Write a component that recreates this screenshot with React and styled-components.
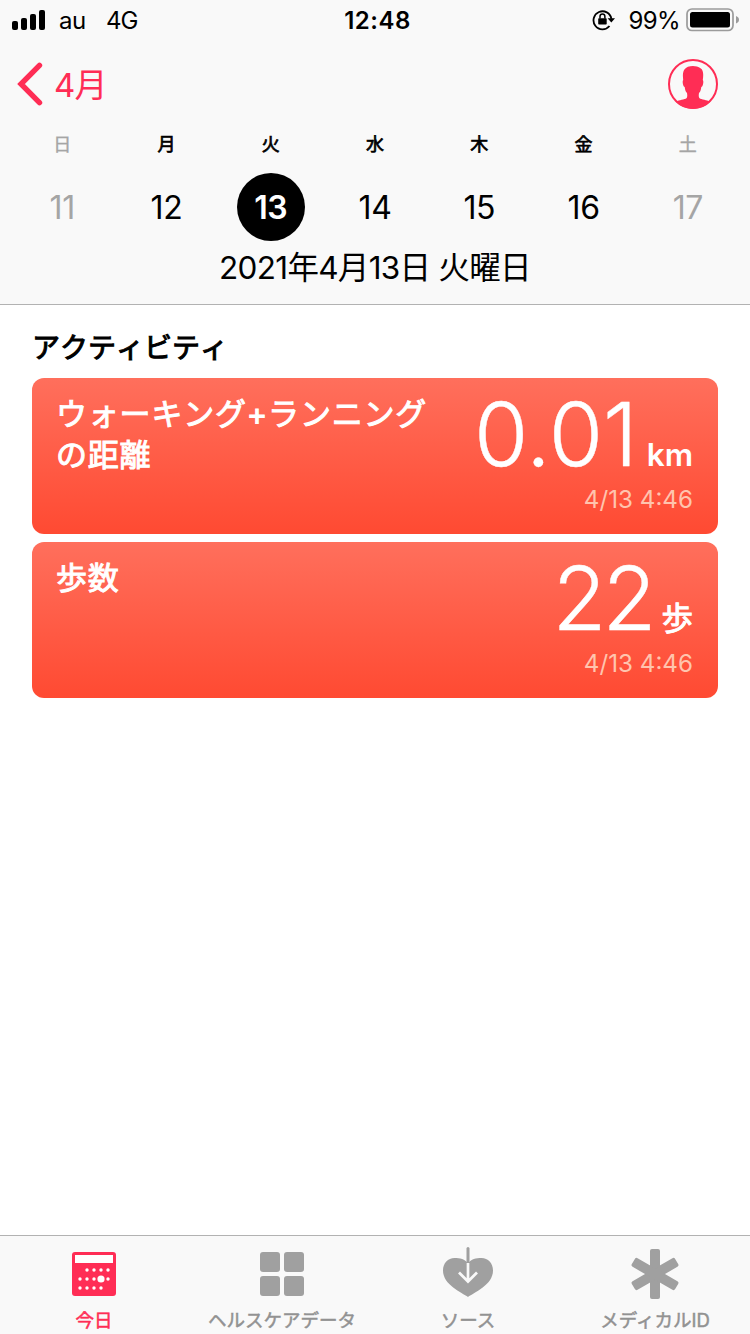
import React from "react";
import styled, { createGlobalStyle } from "styled-components";

const GlobalStyle = createGlobalStyle`
  * {
    box-sizing: border-box;
  }

  body {
    margin: 0;
    background: #fff;
    font-family: "Inter", "Noto Sans CJK JP", sans-serif;
    color: #000;
  }
`;

const Screen = styled.div`
  display: flex;
  flex-direction: column;
  width: 750px;
  height: 1334px;
  overflow: hidden;
`;

const Header = styled.header`
  height: 305px;
  background: #f9f9f9;
  border-bottom: 1px solid #b2b2b2;
`;

const StatusBar = styled.div`
  display: grid;
  grid-template-columns: 1fr auto 1fr;
  align-items: center;
  height: 40px;
  padding: 0 10px 0 12px;
  font-size: 24px;
  line-height: 38px;
`;

const StatusSide = styled.div`
  display: flex;
  align-items: center;
  justify-content: ${(props) => (props.$end ? "flex-end" : "flex-start")};
`;

const Carrier = styled.span`
  margin-left: 13px;
  padding-top: 2px;
  letter-spacing: -0.4px;
`;

const Network = styled.span`
  margin-left: 20px;
  padding-top: 2px;
  letter-spacing: -0.8px;
`;

const Clock = styled.span`
  padding: 2px 0 0 3px;
  font-weight: 600;
  letter-spacing: 0.5px;
`;

const Percent = styled.span`
  margin: 0 6px 0 12px;
  padding-top: 2px;
  letter-spacing: -0.6px;
`;

const NavBar = styled.nav`
  display: flex;
  align-items: center;
  justify-content: space-between;
  height: 88px;
  padding: 0 32px 0 17px;
`;

const BackButton = styled.button`
  display: flex;
  align-items: center;
  gap: 10px;
  padding: 0;
  border: 0;
  background: none;
  color: #ff2d55;
  font: inherit;
  font-size: 33px;
  letter-spacing: -0.9px;
  line-height: 40px;
`;

const BackLabel = styled.span`
  padding-top: 2px;
`;

const Week = styled.div`
  display: grid;
  grid-template-columns: repeat(7, 1fr);
  height: 113px;
  padding: 0 10px;
`;

const Day = styled.div`
  display: flex;
  flex-direction: column;
  align-items: center;
  color: ${(props) => (props.$weekend ? "#a5a5a5" : "#000")};
`;

const Weekday = styled.span`
  height: 34px;
  margin-bottom: 11px;
  font-size: 18px;
  -webkit-text-stroke: ${(props) => (props.$light ? "0.4px" : "0.7px")};
  line-height: 34px;
`;

const DayNumber = styled.span`
  width: 68px;
  height: 68px;
  border-radius: 50%;
  background: ${(props) => (props.$selected ? "#000" : "transparent")};
  color: ${(props) => (props.$selected ? "#fff" : "inherit")};
  font-size: 32px;
  font-weight: ${(props) => (props.$selected ? 600 : 400)};
  letter-spacing: -0.4px;
  line-height: 69px;
  text-align: center;
`;

const FullDate = styled.div`
  height: 54px;
  font-size: 31.5px;
  letter-spacing: -0.7px;
  line-height: 54px;
  text-align: center;
`;

const Main = styled.main`
  flex: 1;
  padding: 23px 32px 0;
`;

const SectionTitle = styled.h2`
  height: 40px;
  margin: 0 0 10px;
  font-size: 28px;
  font-weight: 400;
  font-kerning: none;
  -webkit-text-stroke: 1px;
  line-height: 40px;
`;

const Card = styled.section`
  display: flex;
  justify-content: space-between;
  height: 156px;
  margin-bottom: 8px;
  padding: 16px 25px 0;
  border-radius: 12px;
  background: linear-gradient(#ff6f5c, #ff4a32);
  color: #fff;
`;

const CardTitle = styled.h3`
  width: 380px;
  margin: -1px 0 0 -1px;
  font-size: 31px;
  font-weight: 400;
  font-kerning: none;
  letter-spacing: 0.8px;
  -webkit-text-stroke: 1px;
  line-height: 41px;
`;

const Reading = styled.div`
  display: flex;
  flex-direction: column;
  align-items: flex-end;
`;

const ValueRow = styled.div`
  display: flex;
  align-items: baseline;
  height: 86px;
  line-height: 80px;
`;

const Value = styled.span`
  margin-right: 9px;
  font-size: 88px;
  font-weight: 300;
  letter-spacing: ${(props) => props.$tracking}px;
  -webkit-text-stroke: 0.4px;
`;

const Unit = styled.span`
  font-size: 31.5px;
  font-weight: ${(props) => (props.$kanji ? 400 : 600)};
  -webkit-text-stroke: ${(props) => (props.$kanji ? "1px" : "0")};
`;

const Time = styled.span`
  color: #ffc4ae;
  font-size: 24.2px;
  line-height: 40px;
`;

const TabBar = styled.footer`
  display: grid;
  grid-template-columns: 188px 188px 184px 190px;
  height: 99px;
  border-top: 1px solid #b2b2b2;
  background: #f9f9f9;
`;

const Tab = styled.div`
  display: flex;
  flex-direction: column;
  align-items: center;
  padding-top: 10px;
  color: ${(props) => (props.$active ? "#ff2d55" : "#a0a0a0")};
`;

const TabLabel = styled.span`
  margin-top: 4px;
  color: ${(props) => (props.$active ? "#ff2d55" : "#929292")};
  font-size: 18.5px;
  -webkit-text-stroke: 0.5px;
  line-height: 28px;
  white-space: nowrap;
`;

const SignalIcon = () => (
  <svg width="34" height="20" viewBox="0 0 34 20">
    <rect x="0" y="11" width="6" height="9" rx="2" />
    <rect x="9" y="8" width="6" height="12" rx="2" />
    <rect x="18" y="4" width="6" height="16" rx="2" />
    <rect x="27" y="0" width="6" height="20" rx="2" />
  </svg>
);

const RotationLockIcon = () => (
  <svg width="24" height="22" viewBox="0 0 24 22">
    <path
      d="M17.5 17A9 9 0 1 1 19.4 9.8"
      fill="none"
      stroke="#000"
      strokeWidth="1.8"
    />
    <path d="M15.6 9.3h7.4l-3.7 4.3z" />
    <rect x="6.2" y="9.2" width="8.5" height="6.3" rx="0.8" />
    <path
      d="M8 9.6V7.4a2.45 2.45 0 0 1 4.9 0v2.2"
      fill="none"
      stroke="#000"
      strokeWidth="1.5"
    />
  </svg>
);

const BatteryIcon = () => (
  <svg width="54" height="24" viewBox="0 0 54 24">
    <rect
      x="1"
      y="1"
      width="46"
      height="21.5"
      rx="5"
      fill="none"
      stroke="#9b9b9b"
      strokeWidth="1.7"
    />
    <rect x="4" y="4" width="40" height="15.5" rx="2.5" />
    <path d="M50 8c4 1.3 4 6.2 0 7.5z" fill="#9b9b9b" />
  </svg>
);

const BackIcon = () => (
  <svg width="27" height="44" viewBox="0 0 27 44">
    <path
      d="M22.5 3.3L4 22l18.5 18.7"
      fill="none"
      stroke="#ff2d55"
      strokeWidth="5.4"
      strokeLinecap="round"
      strokeLinejoin="miter"
    />
  </svg>
);

const ProfileIcon = () => (
  <svg width="50" height="50" viewBox="0 0 50 50">
    <circle
      cx="25"
      cy="25"
      r="24"
      fill="none"
      stroke="#ff2d55"
      strokeWidth="2"
    />
    <path
      d="M8 43C11 40.5 16.5 41 18.7 39C19.6 37.5 19.2 35.5 19 34C17.3 32.5 17 30 16.7 28C15 27.5 14 22 15.2 21C14.6 16 14.8 12.5 16.6 10.3C19 6.5 28 5.700 32.500 9.300C35.600 11 35.500 16 34.800 21C36 22 35 27.500 33.300 28C33 30 32.700 32.500 31 34C30.800 35.500 30.400 37.500 31.300 39C33.500 41 39 40.500 42 43C33 52 17 52 8 43Z"
      fill="#ff2d55"
    />
  </svg>
);

const DOTS = [
  [15, 18],
  [22, 18],
  [29, 18],
  [36, 18],
  [8, 27],
  [15, 27],
  [22, 27],
  [36, 27],
  [8, 36],
  [15, 36],
  [22, 36],
  [29, 36],
];

const TodayIcon = () => (
  <svg width="56" height="56" viewBox="-6 -6 56 56">
    <rect width="44" height="44" rx="3" fill="currentColor" />
    <path d="M3 3h38v8H3z" fill="#fff" />
    {DOTS.map(([x, y]) => (
      <circle key={`${x}-${y}`} cx={x} cy={y} r="1.7" fill="#fff" />
    ))}
    <circle cx="29" cy="27" r="3.6" fill="#fff" />
  </svg>
);

const DataIcon = () => (
  <svg width="56" height="56" viewBox="-6 -6 56 56" fill="currentColor">
    <rect width="20" height="20" rx="3" />
    <rect x="24" width="20" height="20" rx="3" />
    <rect y="24" width="20" height="20" rx="3" />
    <rect x="24" y="24" width="20" height="20" rx="3" />
  </svg>
);

const SourcesIcon = () => (
  <svg width="56" height="56" viewBox="0 0 56 56">
    <path
      d="M28 51C22 46.5 3 39 3 24.5C3 17 8 12 14.5 12C20 12 25 13 28 17.5C31 13 36 12 41.5 12C48 12 53 17 53 24.5C53 39 34 46.5 28 51Z"
      fill="currentColor"
    />
    <path
      d="M28 2.5v14"
      stroke="currentColor"
      strokeWidth="3"
      strokeLinecap="round"
    />
    <path
      d="M28 17v18M19 26.5l9 9 9-9"
      fill="none"
      stroke="#f9f9f9"
      strokeWidth="2.7"
    />
  </svg>
);

const MedicalIcon = () => (
  <svg width="56" height="56" viewBox="-28 -28 56 56" fill="currentColor">
    {[0, 60, 120].map((angle) => (
      <rect
        key={angle}
        x="-5"
        y="-25"
        width="10"
        height="50"
        rx="2"
        transform={`rotate(${angle})`}
      />
    ))}
  </svg>
);

const days = [
  { label: "日", number: 11, weekend: true },
  { label: "月", number: 12 },
  { label: "火", number: 13, selected: true },
  { label: "水", number: 14 },
  { label: "木", number: 15 },
  { label: "金", number: 16 },
  { label: "土", number: 17, weekend: true },
];

const readings = [
  {
    title: "ウォーキング+ランニングの距離",
    value: "0.01",
    tracking: 0,
    unit: "km",
    time: "4/13 4:46",
  },
  {
    title: "歩数",
    value: "22",
    tracking: -4,
    unit: "歩",
    kanji: true,
    time: "4/13 4:46",
  },
];

const tabs = [
  { label: "今日", Icon: TodayIcon, active: true },
  { label: "ヘルスケアデータ", Icon: DataIcon },
  { label: "ソース", Icon: SourcesIcon },
  { label: "メディカルID", Icon: MedicalIcon },
];

const App = () => (
  <>
    <GlobalStyle />
    <Screen>
      <Header>
        <StatusBar>
          <StatusSide>
            <SignalIcon />
            <Carrier>au</Carrier>
            <Network>4G</Network>
          </StatusSide>
          <Clock>12:48</Clock>
          <StatusSide $end>
            <RotationLockIcon />
            <Percent>99%</Percent>
            <BatteryIcon />
          </StatusSide>
        </StatusBar>
        <NavBar>
          <BackButton>
            <BackIcon />
            <BackLabel>4月</BackLabel>
          </BackButton>
          <ProfileIcon />
        </NavBar>
        <Week>
          {days.map((day) => (
            <Day key={day.number} $weekend={day.weekend}>
              <Weekday $light={day.weekend}>{day.label}</Weekday>
              <DayNumber $selected={day.selected}>{day.number}</DayNumber>
            </Day>
          ))}
        </Week>
        <FullDate>2021年4月13日 火曜日</FullDate>
      </Header>
      <Main>
        <SectionTitle>アクティビティ</SectionTitle>
        {readings.map((item) => (
          <Card key={item.title}>
            <CardTitle>{item.title}</CardTitle>
            <Reading>
              <ValueRow>
                <Value $tracking={item.tracking}>{item.value}</Value>
                <Unit $kanji={item.kanji}>{item.unit}</Unit>
              </ValueRow>
              <Time>{item.time}</Time>
            </Reading>
          </Card>
        ))}
      </Main>
      <TabBar>
        {tabs.map(({ label, Icon, active }) => (
          <Tab key={label} $active={active}>
            <Icon />
            <TabLabel $active={active}>{label}</TabLabel>
          </Tab>
        ))}
      </TabBar>
    </Screen>
  </>
);

export default App;
